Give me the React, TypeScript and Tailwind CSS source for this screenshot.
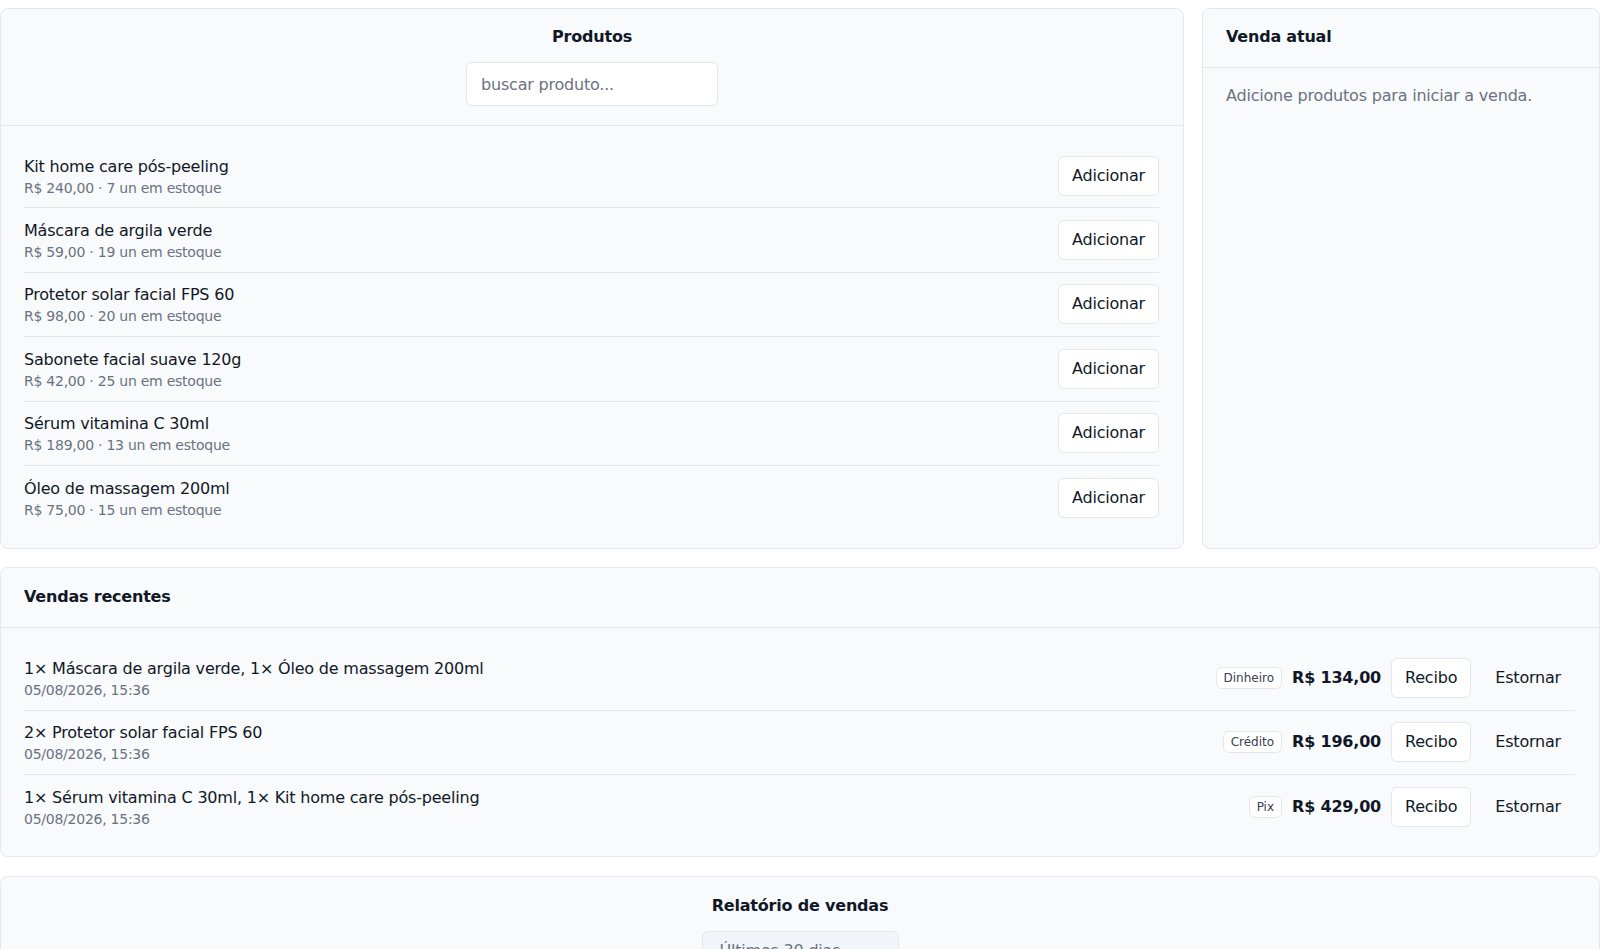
import { useState } from "react"

type Product = {
  name: string
  price: string
  stock: number
}

type Sale = {
  items: string
  date: string
  method: string
  total: string
}

const products: Product[] = [
  { name: "Kit home care pós-peeling", price: "R$ 240,00", stock: 7 },
  { name: "Máscara de argila verde", price: "R$ 59,00", stock: 19 },
  { name: "Protetor solar facial FPS 60", price: "R$ 98,00", stock: 20 },
  { name: "Sabonete facial suave 120g", price: "R$ 42,00", stock: 25 },
  { name: "Sérum vitamina C 30ml", price: "R$ 189,00", stock: 13 },
  { name: "Óleo de massagem 200ml", price: "R$ 75,00", stock: 15 },
]

const sales: Sale[] = [
  {
    items: "1× Máscara de argila verde, 1× Óleo de massagem 200ml",
    date: "05/08/2026, 15:36",
    method: "Dinheiro",
    total: "R$ 134,00",
  },
  {
    items: "2× Protetor solar facial FPS 60",
    date: "05/08/2026, 15:36",
    method: "Crédito",
    total: "R$ 196,00",
  },
  {
    items: "1× Sérum vitamina C 30ml, 1× Kit home care pós-peeling",
    date: "05/08/2026, 15:36",
    method: "Pix",
    total: "R$ 429,00",
  },
]

function ProductList({ query }: { query: string }) {
  const filtered = products.filter((p) =>
    p.name.toLowerCase().includes(query.toLowerCase())
  )

  return (
    <div className="divide-y divide-gray-200 pt-[18px] pr-6 pb-[19px] pl-[23px]">
      {filtered.map((p) => (
        <div key={p.name} className="flex items-center justify-between py-[10.7px]">
          <div>
            <div className="text-base leading-6 text-gray-900">{p.name}</div>
            <div className="text-sm leading-[18px] tracking-[-0.25px] text-gray-500">
              {p.price} · {p.stock} un em estoque
            </div>
          </div>
          <button className="h-10 rounded-md border border-gray-200 bg-white px-[13px] text-base text-gray-900">
            Adicionar
          </button>
        </div>
      ))}
    </div>
  )
}

function RecentSales() {
  return (
    <div className="rounded-lg border border-gray-200 bg-gray-50">
      <div className="border-b border-gray-200 pt-[17px] pr-6 pb-[18px] pl-[23px]">
        <h2 className="text-base leading-6 font-bold text-gray-900">Vendas recentes</h2>
      </div>
      <div className="divide-y divide-gray-200 pt-[18px] pr-6 pb-[18px] pl-[23px]">
        {sales.map((s) => (
          <div key={s.method} className="flex items-center justify-between py-[10.7px]">
            <div>
              <div className="text-base leading-6 text-gray-900">{s.items}</div>
              <div className="text-sm leading-[18px] tracking-[-0.25px] text-gray-500">{s.date}</div>
            </div>
            <div className="flex items-center gap-2.5">
              <span className="rounded-md border border-gray-200 bg-white px-[7px] py-0.5 text-xs leading-4 tracking-normal text-gray-700">
                {s.method}
              </span>
              <span className="text-base font-bold text-gray-900">{s.total}</span>
              <button className="h-10 rounded-md border border-gray-200 bg-white px-[13px] text-base text-gray-900">
                Recibo
              </button>
              <button className="h-10 rounded-md border border-transparent px-[13px] text-base text-gray-900">
                Estornar
              </button>
            </div>
          </div>
        ))}
      </div>
    </div>
  )
}

export default function App() {
  const [query, setQuery] = useState("")

  return (
    <div className="min-h-screen bg-white pt-2 font-['DejaVu_Sans',sans-serif] tracking-[-0.2px] text-gray-900">
      <div className="grid grid-cols-[1fr_398px] gap-[18px]">
        {/* produtos */}
        <div className="rounded-lg border border-gray-200 bg-gray-50">
          <div className="flex flex-col items-center border-b border-gray-200 px-6 pt-4 pb-[19px]">
            <h2 className="text-base leading-6 font-bold text-gray-900">Produtos</h2>
            <input
              value={query}
              onChange={(e) => setQuery(e.target.value)}
              placeholder="buscar produto..."
              className="mt-[13px] h-11 w-[252px] rounded-md border border-gray-200 bg-white px-3.5 text-base tracking-[-0.2px] text-gray-900 outline-none placeholder:text-gray-500"
            />
          </div>
          <ProductList query={query} />
        </div>

        {/* venda atual */}
        <div className="rounded-lg border border-gray-200 bg-gray-50">
          <div className="border-b border-gray-200 pt-4 pr-6 pb-[18px] pl-[23px]">
            <h2 className="text-base leading-6 font-bold text-gray-900">Venda atual</h2>
          </div>
          <div className="pt-4 pr-6 pl-[23px]">
            <p className="text-base leading-6 text-gray-500">
              Adicione produtos para iniciar a venda.
            </p>
          </div>
        </div>
      </div>

      <div className="mt-[18px]">
        <RecentSales />
      </div>

      <div className="mt-[19px] flex flex-col items-center rounded-lg border border-gray-200 bg-gray-50 pt-[17px] pb-6">
        <h2 className="text-base leading-6 font-bold text-gray-900">Relatório de vendas</h2>
        <div className="mt-[13px] flex h-10 w-[197px] items-center rounded-md border border-gray-200 bg-slate-100 px-[17px] text-base text-gray-500">
          Últimos 30 dias
        </div>
        <div className="h-40" />
      </div>
    </div>
  )
}
